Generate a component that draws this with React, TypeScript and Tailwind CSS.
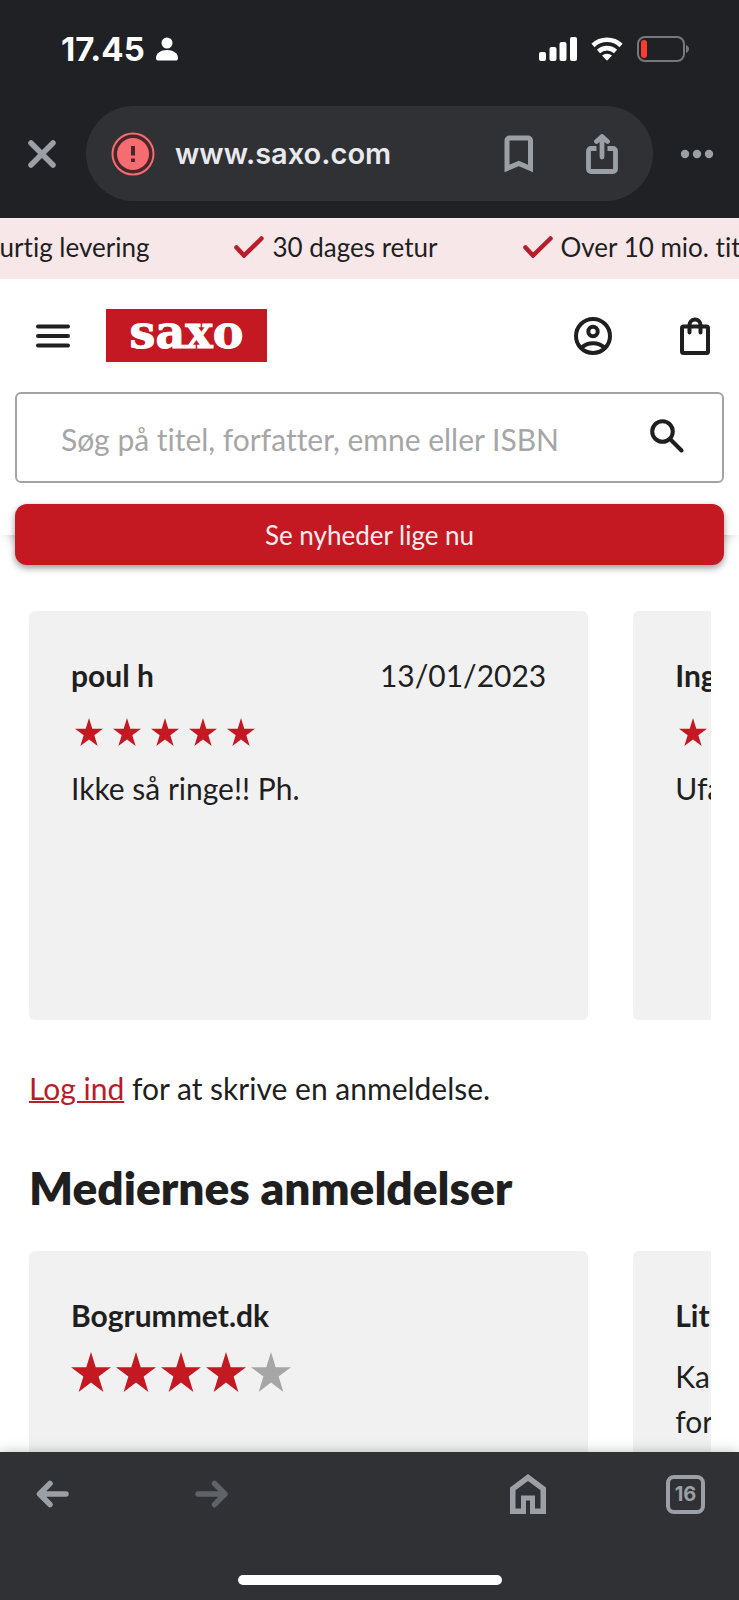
import type { ReactNode } from "react"

const usps = ["Hurtig levering", "30 dages retur", "Over 10 mio. titler"]

const userReviews = [
  { name: "poul h", date: "13/01/2023", rating: 5, text: "Ikke så ringe!! Ph." },
  { name: "Ing", date: "", rating: 5, text: "Ufa" },
]

const mediaReviews = [
  { name: "Bogrummet.dk", rating: 4, lines: [] },
  { name: "Lit", rating: 0, lines: ["Ka", "for"] },
]

const STAR = "M12 0l2.83 9.17H24l-7.42 5.6L19.42 24 12 18.35 4.58 24l2.84-9.23L0 9.17h9.17z"

function Star({ className }: { className: string }) {
  return (
    <svg viewBox="0 0 24 24" fill="currentColor" className={className} aria-hidden="true">
      <path d={STAR} />
    </svg>
  )
}

function StatusBar() {
  return (
    <div className="flex items-center justify-between pt-[29px] pr-[50px] pl-[61px] font-[Inter,sans-serif] text-white">
      <div className="flex items-center gap-[11px]">
        <span className="text-[33px] leading-10 font-bold">17.45</span>
        <svg width="22" height="24" viewBox="0 0 22 24" fill="currentColor" aria-hidden="true">
          <circle cx="11" cy="6" r="5.5" />
          <path d="M0 21c0-5 5-8 11-8s11 3 11 8c0 2-1 2.5-2.5 2.5h-17C1 23.5 0 23 0 21z" />
        </svg>
      </div>
      <div className="flex items-center gap-3.5">
        <svg width="38" height="24" viewBox="0 0 38 24" fill="currentColor" aria-hidden="true">
          <rect x="0" y="15" width="7" height="9" rx="2" />
          <rect x="10.5" y="10" width="7" height="14" rx="2" />
          <rect x="20.5" y="5" width="7" height="19" rx="2" />
          <rect x="31" y="0" width="7" height="24" rx="2" />
        </svg>
        <svg width="32" height="24" viewBox="0 0 32 24" fill="none" stroke="currentColor" strokeWidth="4.6" aria-hidden="true">
          <path d="M2 8.5a20 20 0 0 1 28 0" />
          <path d="M7.5 14.5a12.3 12.3 0 0 1 17 0" />
          <path d="M11 18.6a7.5 7.5 0 0 1 10 0L16 23.8z" fill="currentColor" stroke="none" />
        </svg>
        <svg width="52" height="26" viewBox="0 0 52 26" fill="none" aria-hidden="true">
          <rect x="1" y="1" width="46" height="24" rx="7" stroke="#77787b" strokeWidth="2" />
          <rect x="4" y="4" width="6" height="18" rx="3" fill="#ff3b30" />
          <path d="M49 9c4 1.5 4 6.5 0 8z" fill="#77787b" />
        </svg>
      </div>
    </div>
  )
}

function AddressBar() {
  return (
    <div className="mt-[37px] flex items-center pr-[25px] pl-7 text-[#9aa0a6]">
      <button type="button" aria-label="Luk">
        <svg width="28" height="28" viewBox="0 0 28 28" fill="none" stroke="currentColor" strokeWidth="5.5" strokeLinecap="round">
          <path d="M3 3l22 22M25 3L3 25" />
        </svg>
      </button>
      <div className="ml-[30px] flex h-[95px] flex-1 items-center rounded-full bg-[#303134] pr-[35px] pl-[25px]">
        <svg width="44" height="44" viewBox="0 0 44 44" fill="none" aria-hidden="true">
          <circle cx="22" cy="22" r="20.5" fill="#48262b" stroke="#f76c70" strokeWidth="2" />
          <circle cx="22" cy="22" r="16" fill="#f76c70" />
          <path d="M20 14h4v9.5h-4zM20 26.5h4v3.5h-4z" fill="#48262b" />
        </svg>
        <span className="ml-5 font-[Inter,sans-serif] text-[29px] leading-10 font-semibold text-[#e8eaed]">
          www.saxo.com
        </span>
        <button type="button" aria-label="Bogmærke" className="ml-auto">
          <svg width="30" height="38" viewBox="0 0 30 38" fill="none" stroke="currentColor" strokeWidth="5">
            <path d="M3 33.5V5.5a2.5 2.5 0 0 1 2.5-2.5h18.5a2.5 2.5 0 0 1 2.5 2.5v28l-11.7-5z" />
          </svg>
        </button>
        <button type="button" aria-label="Del" className="ml-[52px]">
          <svg width="32" height="40" viewBox="0 0 32 40" fill="none" stroke="currentColor" strokeWidth="4.8" strokeLinecap="round" strokeLinejoin="round">
            <path d="M10.5 14.5H5A2.5 2.5 0 0 0 2.500 17v18A2.500 2.500 0 0 0 5 37.500h22a2.500 2.500 0 0 0 2.500-2.500V17a2.500 2.500 0 0 0-2.500-2.500h-5.500" strokeLinecap="butt" />
            <path d="M16 23V3M10.500 7.500L16 2.500l5.500 5" />
          </svg>
        </button>
      </div>
      <button type="button" aria-label="Mere" className="ml-[27px]">
        <svg width="34" height="10" viewBox="0 0 34 10" fill="currentColor">
          <circle cx="5" cy="5" r="4.2" />
          <circle cx="17" cy="5" r="4.2" />
          <circle cx="29" cy="5" r="4.2" />
        </svg>
      </button>
    </div>
  )
}

function UspBar() {
  return (
    <div className="overflow-hidden bg-[#f8e7e8]">
      <ul className="-ml-[58px] flex h-[61px] w-max items-center gap-[85px] pb-1 text-[26px] leading-8 whitespace-nowrap">
        {usps.map((usp) => (
          <li key={usp} className="flex items-center gap-2">
            <svg width="30" height="22" viewBox="0 0 30 22" fill="none" stroke="#b91c2b" strokeWidth="4.5" strokeLinecap="round" aria-hidden="true">
              <path d="M2.500 11.500l7.500 8L27.500 2.500" />
            </svg>
            {usp}
          </li>
        ))}
      </ul>
    </div>
  )
}

function ShopHeader() {
  return (
    <header className="relative flex flex-col bg-white px-[15px] pt-[30px] shadow-[0_10px_12px_-8px_rgba(0,0,0,0.25)]">
      <div className="flex items-center pr-[13px] pl-[21px]">
        <button type="button" aria-label="Menu">
          <svg width="34" height="24" viewBox="0 0 34 24" fill="none" stroke="currentColor" strokeWidth="4" strokeLinecap="round">
            <path d="M2 2.500h30M2 12h30M2 21.500h30" />
          </svg>
        </button>
        <a
          href="#"
          className="ml-9 flex h-[53px] w-[161px] items-center justify-center bg-[#c41922] pb-1.5 font-['DejaVu_Serif',serif] text-[46px] leading-[45px] font-bold text-white [-webkit-text-stroke:1px_white]"
        >
          saxo
        </a>
        <button type="button" aria-label="Min konto" className="ml-auto">
          <svg width="38" height="38" viewBox="0 0 38 38" fill="none" stroke="currentColor" strokeWidth="4">
            <circle cx="19" cy="19" r="17" />
            <circle cx="19" cy="14.5" r="4.7" />
            <path d="M7 31c7-6.500 17-6.500 24 0" />
          </svg>
        </button>
        <button type="button" aria-label="Kurv" className="ml-[67px]">
          <svg width="32" height="38" viewBox="0 0 32 38" fill="none" stroke="currentColor" strokeWidth="4" strokeLinecap="round" strokeLinejoin="round">
            <rect x="3" y="9.500" width="26" height="26.500" rx="1.500" />
            <path d="M10.500 15.500V8a5.500 5.500 0 0 1 11 0v7.500" />
          </svg>
        </button>
      </div>
      <form className="mt-[30px] flex h-[91px] items-center rounded-md border-2 border-[#a3a3a3] pr-[38px] pl-11">
        <input
          type="search"
          aria-label="Søg"
          placeholder="Søg på titel, forfatter, emne eller ISBN"
          className="mt-1 h-[45px] min-w-0 flex-1 text-[30px] leading-[45px] outline-none placeholder:text-[#a6a6a6]"
        />
        <button type="submit" aria-label="Søg" className="pb-1">
          <svg width="34" height="34" viewBox="0 0 34 34" fill="none" stroke="currentColor" strokeWidth="4" strokeLinecap="round">
            <circle cx="12.5" cy="12.5" r="10.3" />
            <path d="M20 20l11.500 11.500" />
          </svg>
        </button>
      </form>
      <button
        type="button"
        className="mt-[21px] -mb-[30px] h-[61px] rounded-xl bg-[#c41922] text-center text-[26px] leading-8 text-[#fdeced] shadow-[0_3px_7px_rgba(0,0,0,0.4)]"
      >
        Se nyheder lige nu
      </button>
    </header>
  )
}

function Card({ children }: { children: ReactNode }) {
  return (
    <article className="h-[409px] w-[82%] shrink-0 rounded-md bg-[#f1f1f1] p-[42px] whitespace-nowrap">
      {children}
    </article>
  )
}

function BottomBar() {
  return (
    <nav className="relative flex h-[148px] shrink-0 flex-col bg-[#303134] text-[#9aa0a6] shadow-[0_0_12px_rgba(0,0,0,0.25)]">
      <div className="flex items-center pt-[22px] pr-[34px] pl-9">
        <button type="button" aria-label="Tilbage">
          <svg width="34" height="28" viewBox="0 0 34 28" fill="none" stroke="currentColor" strokeWidth="5.5" strokeLinecap="round" strokeLinejoin="round">
            <path d="M30 14H4M14 3.500L3.500 14 14 24.500" />
          </svg>
        </button>
        <button type="button" aria-label="Frem" disabled className="ml-[125px] text-[#5f6368]">
          <svg width="34" height="28" viewBox="0 0 34 28" fill="none" stroke="currentColor" strokeWidth="5.5" strokeLinecap="round" strokeLinejoin="round">
            <path d="M3 14h26M19.500 3.500L30 14 19.500 24.500" />
          </svg>
        </button>
        <button type="button" aria-label="Hjem" className="ml-auto">
          <svg width="36" height="40" viewBox="0 0 36 40" fill="currentColor">
            <path d="M18 0L0 13.500V40h16V26.500h4V40h16V13.500zM5.500 34.500V16.200L18 7l12.500 9.200v18.300H25V21.500H11v13z" />
          </svg>
        </button>
        <button
          type="button"
          aria-label="16 faner"
          className="ml-[120px] flex size-[39px] items-center justify-center rounded-lg border-4 border-[#9aa0a6] font-[Inter,sans-serif] text-xl leading-6 font-bold"
        >
          16
        </button>
      </div>
      <div className="mx-auto mt-auto mb-[15px] h-2.5 w-[264px] rounded-full bg-white" />
    </nav>
  )
}

export default function App() {
  return (
    <div className="flex h-screen flex-col overflow-hidden bg-white font-[Lato,sans-serif] text-[30px] leading-[45px] text-[#1f1f1f] [font-variant-ligatures:none]">
      <div className="h-[218px] shrink-0 bg-[#202124]">
        <StatusBar />
        <AddressBar />
      </div>

      <div className="min-h-0 flex-1 overflow-hidden">
        <UspBar />
        <ShopHeader />

        <main className="px-[29px] pt-[76px]">
          <section className="-mr-px flex gap-[45px] overflow-hidden">
            {userReviews.map((review) => (
              <Card key={review.name}>
                <div className="flex justify-between">
                  <h3 className="font-bold">{review.name}</h3>
                  <time>{review.date}</time>
                </div>
                <div className="flex h-[68px] items-center gap-2.5 pl-1" role="img" aria-label={`${review.rating} af 5 stjerner`}>
                  {[1, 2, 3, 4, 5].map((n) => (
                    <Star key={n} className="size-7 shrink-0 text-[#c41922]" />
                  ))}
                </div>
                <p>{review.text}</p>
              </Card>
            ))}
          </section>

          <p className="mt-[46px]">
            <a href="#" className="text-[#b91c2b] underline decoration-2">Log ind</a> for at skrive en anmeldelse.
          </p>

          <h2 className="mt-12 text-[46px] leading-[58px] font-extrabold">Mediernes anmeldelser</h2>

          <section className="mt-[34px] -mr-px flex gap-[45px] overflow-hidden">
            {mediaReviews.map((review) => (
              <Card key={review.name}>
                <h3 className="font-bold">{review.name}</h3>
                {review.rating > 0 && (
                  <div className="mt-3.5 flex gap-[5px]" role="img" aria-label={`${review.rating} af 5 stjerner`}>
                    {[1, 2, 3, 4, 5].map((n) => (
                      <Star
                        key={n}
                        className={n <= review.rating ? "size-10 shrink-0 text-[#c41922]" : "size-10 shrink-0 text-[#a6a6a6]"}
                      />
                    ))}
                  </div>
                )}
                <div className="mt-4">
                  {review.lines.map((line) => (
                    <p key={line}>{line}</p>
                  ))}
                </div>
              </Card>
            ))}
          </section>
        </main>
      </div>

      <BottomBar />
    </div>
  )
}
